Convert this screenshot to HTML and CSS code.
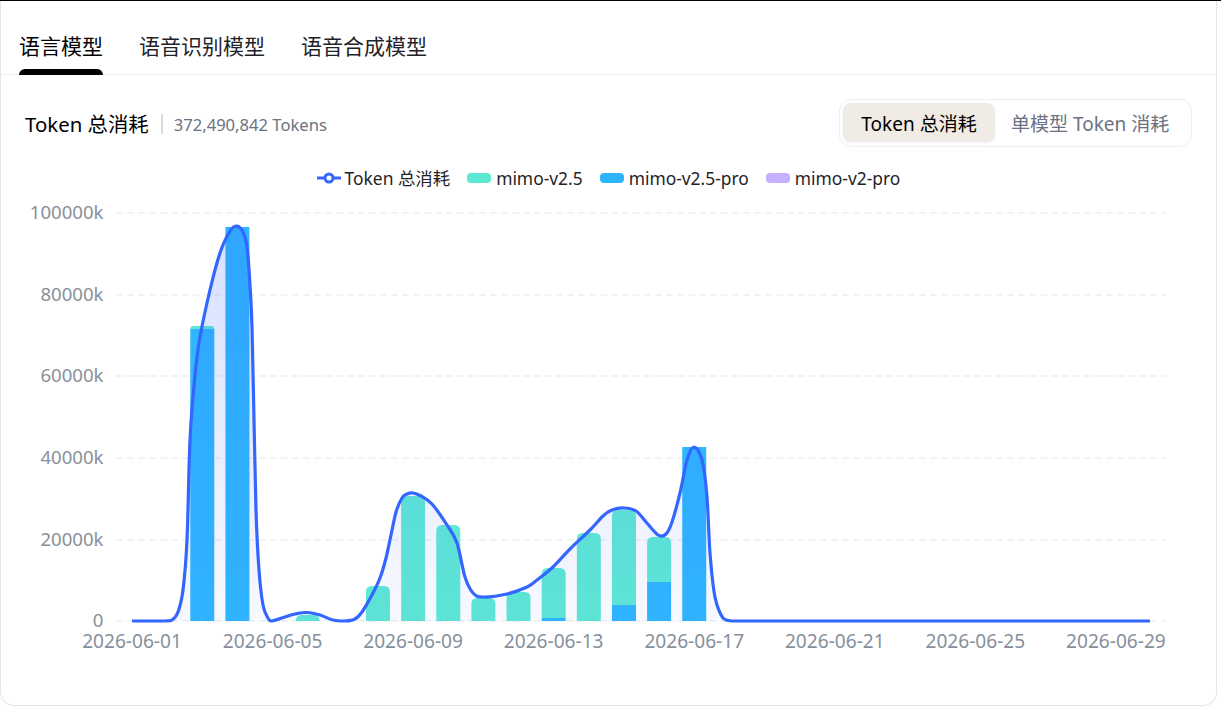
FILE: index.html
```html
<!DOCTYPE html>
<html lang="zh-CN">
<head>
  <meta charset="UTF-8">
  <meta name="viewport" content="width=device-width, initial-scale=1.0">
  <title>Token 总消耗</title>
  <link rel="stylesheet" href="styles.css">
</head>
<body>
  <div class="card">
    <div class="tabs">
      <div class="tab active">语言模型</div>
      <div class="tab">语音识别模型</div>
      <div class="tab">语音合成模型</div>
    </div>

    <div class="head">
      <div class="summary">
        <span class="summary-title">Token 总消耗</span>
        <span class="summary-value">372,490,842 Tokens</span>
      </div>
      <div class="segment">
        <div class="segment-item active">Token 总消耗</div>
        <div class="segment-item">单模型 Token 消耗</div>
      </div>
    </div>

    <div class="legend">
      <div class="legend-item">
        <svg class="legend-line" width="24" height="12" viewBox="0 0 24 12">
          <path d="M0 6H24" stroke="#3366ff" stroke-width="3"/>
          <circle cx="12" cy="6" r="4" fill="#fff" stroke="#3366ff" stroke-width="3"/>
        </svg>
        Token 总消耗
      </div>
      <div class="legend-item"><i class="swatch teal"></i>mimo-v2.5</div>
      <div class="legend-item"><i class="swatch blue"></i>mimo-v2.5-pro</div>
      <div class="legend-item"><i class="swatch purple"></i>mimo-v2-pro</div>
    </div>

    <svg id="chart" class="chart" viewBox="1 192 1215 500"></svg>
  </div>
  <script src="chart.js"></script>
</body>
</html>
```

FILE: styles.css
```css
* {
  box-sizing: border-box;
}

html, body {
  margin: 0;
  height: 100%;
  background: #fff;
  font-family: "Noto Sans", "Noto Sans CJK SC", sans-serif;
  color: #000;
}

body {
  border-top: 1px solid #000;
  padding-right: 4px;
}

.card {
  width: 1217px;
  height: 705px;
  border: 1px solid #e3e5ee;
  border-top: none;
  border-radius: 0 0 14px 14px;
}

.tabs {
  display: flex;
  gap: 36px;
  height: 74px;
  padding: 0 18px;
  border-bottom: 1px solid #eeeff2;
}

.tab {
  position: relative;
  padding-top: 29px;
  font-size: 21px;
  line-height: 32px;
  color: #1f2329;
}

.tab.active {
  color: #000;
}

.tab.active::after {
  content: "";
  position: absolute;
  left: 0;
  right: 0;
  bottom: -1px;
  height: 6px;
  border-radius: 6px 6px 0 0;
  background: #000;
}

.head {
  display: flex;
  justify-content: space-between;
  align-items: center;
  height: 48px;
  margin-top: 24px;
  padding: 0 24px;
}

.summary {
  display: flex;
  align-items: center;
  padding-top: 2px;
}

.summary-title {
  font-size: 20.4px;
  padding-right: 12px;
  border-right: 2px solid #d9d9d9;
  line-height: 20px;
}

.summary-value {
  margin-left: 11px;
  font-size: 16.6px;
  color: #6b7280;
}

.segment {
  display: flex;
  width: 353px;
  height: 48px;
  padding: 3px;
  border: 1px solid #f1eeea;
  border-radius: 12px;
}

.segment-item {
  display: flex;
  align-items: center;
  justify-content: center;
  height: 39px;
  padding: 1px 16px 0;
  font-size: 19px;
  color: #6b7280;
}

.segment-item.active {
  width: 152px;
  padding: 1px 0 0;
  border-radius: 8px;
  background: #f0ebe5;
  color: #000;
  box-shadow: 0 1px 3px rgba(0, 0, 0, 0.06);
}

.legend {
  display: flex;
  justify-content: center;
  gap: 17px;
  height: 24px;
  margin-top: 19px;
  margin-bottom: 2px;
}

.legend-item {
  display: flex;
  align-items: center;
  font-size: 17.4px;
  line-height: 24px;
  color: #1f2329;
}

.legend-line {
  margin-right: 4px;
}

.swatch {
  width: 24px;
  height: 10px;
  margin-right: 5px;
  border-radius: 4px;
}

.teal {
  background: #5ce8d0;
}

.blue {
  background: #2eb4ff;
}

.purple {
  background: #c4b0ff;
}

.chart {
  display: block;
  width: 1215px;
  height: 500px;
}

.grid {
  stroke: #f2f3f5;
  stroke-width: 2;
  stroke-dasharray: 7 4;
}

.axis-label {
  font-size: 19.1px;
  fill: #86909c;
}

.axis-label.value {
  font-size: 18.6px;
}
```

FILE: chart.js
```js
// page px: y = 621 at zero, 213 at 100000k, one day = 35.14px from x = 132
var svg = document.getElementById('chart');
var NS = 'http://www.w3.org/2000/svg';
var BASE = 621;
var TEAL = '#5fe9d4';
var BLUE = '#2fb6ff';

function dayX(d) {
  return 132 + (d - 1) * 35.14;
}

function add(tag, attrs, text) {
  var el = document.createElementNS(NS, tag);
  for (var k in attrs) el.setAttribute(k, attrs[k]);
  if (text) el.textContent = text;
  svg.appendChild(el);
  return el;
}

// gradient for the area under the line
svg.innerHTML = '<defs><linearGradient id="area" x1="0" y1="0" x2="0" y2="1">' +
  '<stop offset="0" stop-color="#3366ff" stop-opacity="0.2"/>' +
  '<stop offset="1" stop-color="#3366ff" stop-opacity="0.04"/>' +
  '</linearGradient></defs>';

// y axis
[[213, '100000k'], [295, '80000k'], [376, '60000k'], [458, '40000k'], [540, '20000k'], [621, '0']].forEach(function (t) {
  add('line', { x1: 116, x2: 1166, y1: t[0], y2: t[0], class: 'grid' });
  add('text', { x: 103.5, y: t[0] + 6, 'text-anchor': 'end', class: 'axis-label value' }, t[1]);
});

// x axis
['01', '05', '09', '13', '17', '21', '25', '29'].forEach(function (d) {
  add('text', { x: dayX(+d), y: 648, 'text-anchor': 'middle', class: 'axis-label' }, '2026-06-' + d);
});

// bars: [day, top of stack, top of blue part]
var bars = [
  [3, 326, 329], [4, 227, 227], [6, 615, 621], [8, 586, 621], [9, 496, 621],
  [10, 525, 621], [11, 598, 621], [12, 592, 621], [13, 568, 618], [14, 533, 621],
  [15, 510, 605], [16, 537, 582], [17, 447, 447]
];

bars.forEach(function (b) {
  var x = dayX(b[0]) - 12;
  if (b[1] < b[2]) {
    var r = Math.min(6, b[2] - b[1]);
    add('path', {
      d: 'M' + x + ' ' + b[2] + 'V' + (b[1] + r) + 'q0 -' + r + ' ' + r + ' -' + r +
        'h' + (24 - 2 * r) + 'q' + r + ' 0 ' + r + ' ' + r + 'V' + b[2] + 'Z',
      fill: TEAL
    });
  }
  if (b[2] < BASE) {
    add('rect', { x: x, y: b[2], width: 24, height: BASE - b[2], fill: BLUE });
  }
});

// total line, read off as points and smoothed
var pts = [
  [132, 621], [165, 621], [172, 620], [178, 612], [183, 590], [187, 540], [190, 440], [195, 375], [200, 337],
  [210, 290], [220, 253], [230, 231], [237, 226], [243, 232], [247, 247], [250, 285], [252, 327], [254, 420],
  [256, 510], [259, 570], [263, 605], [268, 618], [272, 621], [285, 617], [295, 614], [307, 612.5], [320, 615],
  [333, 620], [345, 621], [355, 619], [362, 612], [373, 593], [380, 578], [386, 558], [391, 535], [396, 512],
  [402, 498], [407, 494], [413, 493], [421, 496], [432, 504], [447, 525], [457, 543], [465, 577], [473, 593],
  [483, 597], [507, 594], [527, 587], [537, 580], [553, 567], [570, 549], [590, 530], [603, 516], [612, 510],
  [624, 508], [636, 511], [646, 522], [658, 535], [666, 534], [672, 522], [680, 493], [687, 460], [694, 447],
  [702, 460], [707, 497], [710, 553], [715, 597], [723, 618], [732, 621], [745, 621], [1150, 621]
];

function smooth(p) {
  var d = 'M' + p[0][0] + ' ' + p[0][1];
  for (var i = 0; i < p.length - 1; i++) {
    var a = p[i - 1] || p[i], b = p[i], c = p[i + 1], e = p[i + 2] || c;
    var c1x = b[0] + (c[0] - a[0]) / 6, c1y = Math.min(BASE, b[1] + (c[1] - a[1]) / 6);
    var c2x = c[0] - (e[0] - b[0]) / 6, c2y = Math.min(BASE, c[1] - (e[1] - b[1]) / 6);
    // long flat runs stay straight
    if (e[0] - c[0] > 100 || c[0] - b[0] > 100) {
      c1x = b[0]; c1y = b[1]; c2x = c[0]; c2y = c[1];
    }
    d += 'C' + c1x.toFixed(1) + ' ' + c1y.toFixed(1) + ' ' + c2x.toFixed(1) + ' ' + c2y.toFixed(1) + ' ' + c[0] + ' ' + c[1];
  }
  return d;
}

var line = smooth(pts);
add('path', { d: line + 'V621H132Z', fill: 'url(#area)' });
add('path', { d: line, fill: 'none', stroke: '#3366ff', 'stroke-width': 3.2 });
```
